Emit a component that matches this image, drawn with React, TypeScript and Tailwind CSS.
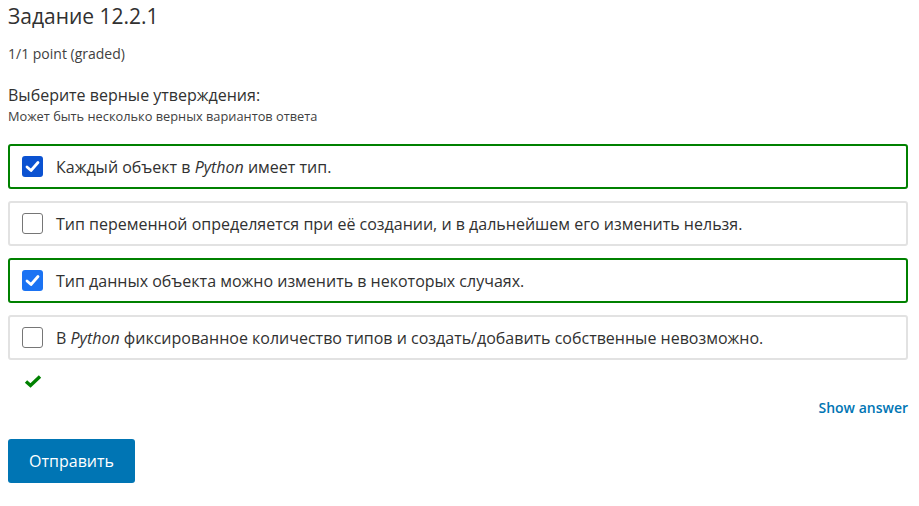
import { Fragment } from 'react';

type Choice = { parts: (string | { em: string })[]; checked: boolean; tone?: string };

const choices: Choice[] = [
  { parts: ['Каждый объект в ', { em: 'Python' }, ' имеет тип.'], checked: true, tone: 'bg-[#0b52d1]' },
  { parts: ['Тип переменной определяется при её создании, и в дальнейшем его изменить нельзя.'], checked: false },
  { parts: ['Тип данных объекта можно изменить в некоторых случаях.'], checked: true, tone: 'bg-[#1b73f3]' },
  { parts: ['В ', { em: 'Python' }, ' фиксированное количество типов и создать/добавить собственные невозможно.'], checked: false },
];

function Box({ checked, tone }: { checked: boolean; tone?: string }) {
  if (!checked) {
    return <span className="w-[21px] h-[21px] shrink-0 rounded-[3px] border-[1.5px] border-[#767676] bg-white" />;
  }
  return (
    <span className={`w-[21px] h-[21px] shrink-0 rounded-[3px] ${tone} flex items-center justify-center`}>
      <svg width="15" height="13" viewBox="0 0 15 13">
        <path d="M2 7 L6 10.5 L13 2.5" fill="none" stroke="white" strokeWidth="2.8" strokeLinecap="round" strokeLinejoin="round" />
      </svg>
    </span>
  );
}

export default function App() {
  return (
    <div className="w-[919px] h-[506px] bg-white pl-2 pr-[11px] pt-[1px] text-[#313131]" style={{ fontFamily: '"Open Sans", sans-serif' }}>
      <h2 className="text-[21px] leading-[30px]">Задание 12.2.1</h2>
      <div className="mt-[13px] text-[14px] leading-[20px] text-[#414141]">1/1 point (graded)</div>
      <div className="mt-[21px] text-[16px] leading-[20px]">Выберите верные утверждения:</div>
      <div className="mt-[2px] text-[12.8px] leading-[18px] text-[#414141]">Может быть несколько верных вариантов ответа</div>
      <div className="mt-[19px] flex flex-col gap-[12px]">
        {choices.map((c, i) => (
          <div
            key={i}
            className={`h-[45px] rounded-[3px] border-2 flex items-center pl-[12px] gap-[13px] ${c.checked ? 'border-[#008100]' : 'border-[#e2e2e2]'}`}
          >
            <Box checked={c.checked} tone={c.tone} />
            <span className="text-[16px]">
              {c.parts.map((p, j) => (
                <Fragment key={j}>{typeof p === 'string' ? p : <em>{p.em}</em>}</Fragment>
              ))}
            </span>
          </div>
        ))}
      </div>
      <div className="mt-[14px] pl-[16px] h-[18px]">
        <svg width="18" height="14" viewBox="0 0 18 14">
          <path d="M2 7.5 L6.5 11.5 L16 2.5" fill="none" stroke="#008100" strokeWidth="3.4" strokeLinejoin="miter" />
        </svg>
      </div>
      <div className="flex justify-end mt-[6px]">
        <span className="text-[14px] font-semibold text-[#0075b4] leading-[20px]">Show answer</span>
      </div>
      <button className="mt-[21px] h-[44px] w-[127px] rounded-[3px] bg-[#0075b4] text-white text-[16px]">Отправить</button>
    </div>
  );
}
